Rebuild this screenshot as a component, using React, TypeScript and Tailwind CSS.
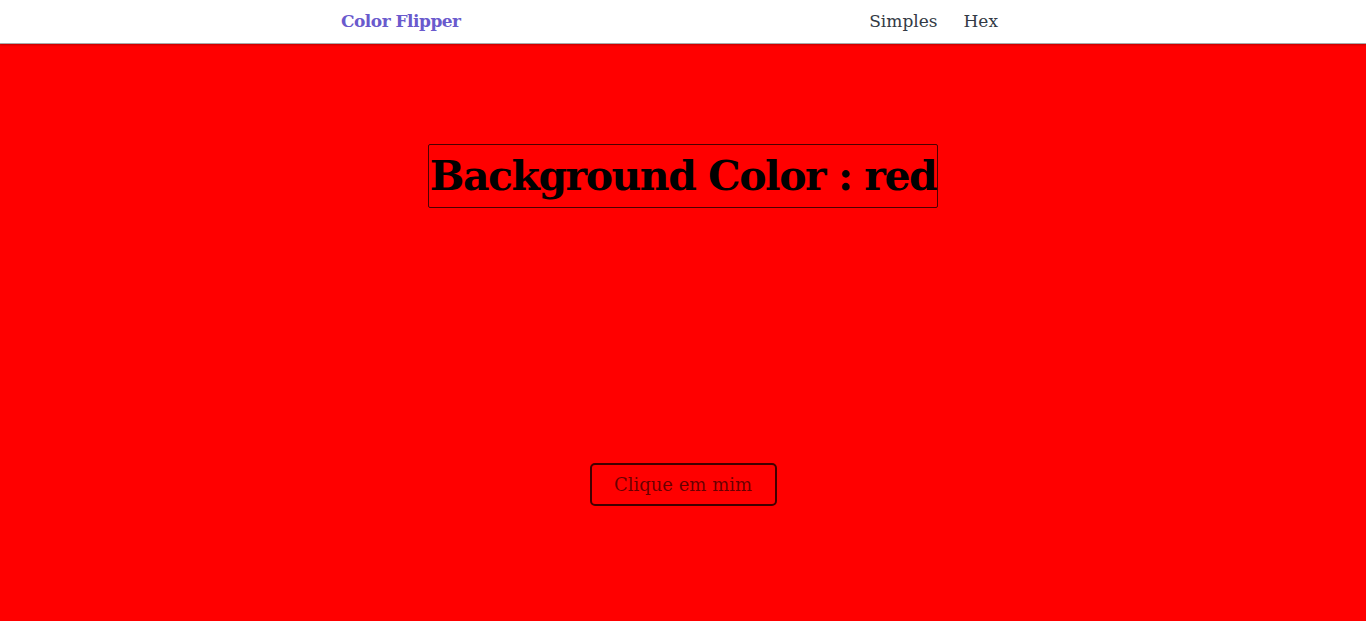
import React, { useState } from 'react';

const colors = ['red', 'green', 'blue', 'rgba(133,122,200)', '#f15025'];

const App = () => {
  const [color, setColor] = useState('red');

  const flip = () => {
    const next = colors[Math.floor(Math.random() * colors.length)];
    setColor(next);
  };

  return (
    <div className="min-h-[621px] flex flex-col font-['DejaVu_Serif',serif]" style={{ background: color }}>
      {/* Navbar */}
      <nav className="h-[44px] bg-white border-b border-[#a9a9a9] shadow-[0_1px_2px_rgba(0,0,0,0.25)] flex items-center">
        <div className="ml-[341px] w-[657px] flex items-center justify-between">
          <span className="text-[17px] font-bold text-[#6a5acd] tracking-[-0.5px]">Color Flipper</span>
          <div className="flex items-center gap-[26px] text-[17px] text-[#333a45]">
            <a>Simples</a>
            <a>Hex</a>
          </div>
        </div>
      </nav>

      {/* Main */}
      <main className="flex-1 flex flex-col items-center pt-[100px]">
        <h1 className="border border-black/70 rounded-[2px] text-[41px] leading-[62px] font-bold text-black tracking-[-1.5px] px-[1px]">
          Background Color : {color}
        </h1>
        <button
          onClick={flip}
          className="mt-[255px] w-[187px] h-[43px] rounded-[5px] border-2 border-black/75 text-[18px] text-black/60"
        >
          Clique em mim
        </button>
      </main>
    </div>
  );
};

export default App;
